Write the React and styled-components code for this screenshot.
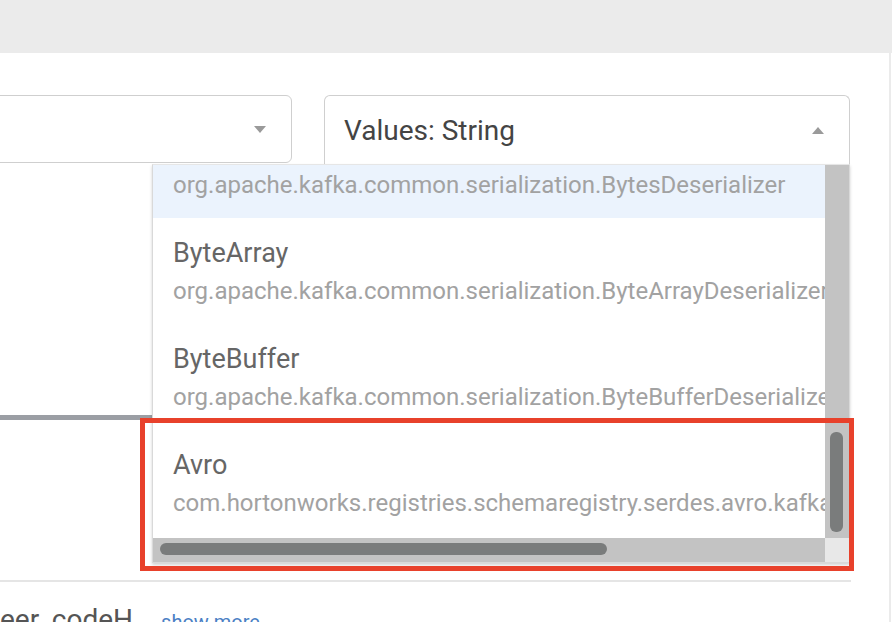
import React from 'react';
import styled, { createGlobalStyle } from 'styled-components';

const GlobalStyle = createGlobalStyle`
  * { box-sizing: border-box; }
  html, body {
    margin: 0;
    padding: 0;
    background: #fff;
    overflow: hidden;
    font-family: Roboto, "Liberation Sans", sans-serif;
  }
`;

const Page = styled.div`
  position: relative;
  width: 892px;
  height: 622px;
  display: flex;
  flex-direction: column;
`;

const TopBar = styled.div`
  height: 53px;
  background: #ebebeb;
  flex-shrink: 0;
`;

const Panel = styled.div`
  width: 891px;
  flex: 1;
  border-right: 2px solid #ebebeb;
  overflow: hidden;
`;

const FormArea = styled.div`
  width: 851px;
  height: 529px;
  padding-top: 42px;
  border-bottom: 2px solid #e5e5e5;
`;

const SelectRow = styled.div`
  display: grid;
  grid-template-columns: 340px 526px;
  column-gap: 32px;
  margin-left: -48px;
  align-items: start;
`;

const Column = styled.div`
  position: relative;
  display: flex;
  flex-direction: column;
`;

const Select = styled.div`
  display: flex;
  align-items: center;
  justify-content: space-between;
  height: ${(p) => (p.$open ? '69px' : '68px')};
  padding: 0 25px 0 19px;
  border: 1px solid #cfcfcf;
  border-bottom: ${(p) => (p.$open ? 'none' : '1px solid #cfcfcf')};
  border-radius: ${(p) => (p.$open ? '6px 6px 0 0' : '6px')};
  background: #fff;
  font-size: 28px;
  color: #444;
`;

const Caret = styled.span`
  width: 0;
  height: 0;
  border-left: 6px solid transparent;
  border-right: 6px solid transparent;
  ${(p) => (p.$up ? 'border-bottom: 7px solid #9a9a9a;' : 'border-top: 7px solid #9a9a9a;')}
`;

const LeftBox = styled.div`
  height: 257px;
  background: #fff;
  border-bottom: 5px solid #9b9ea4;
`;

const Dropdown = styled.div`
  position: absolute;
  top: 69px;
  right: 0;
  width: 698px;
  height: 399px;
  display: grid;
  grid-template-columns: 672px 24px;
  grid-template-rows: 373px 24px;
  background: #fff;
  border: 1px solid #d9d9d9;
  border-top-color: #e6e6e6;
  box-shadow: 0 2px 3px rgba(0, 0, 0, 0.18);
  z-index: 2;
`;

const List = styled.div`
  overflow: hidden;
`;

const ListInner = styled.div`
  margin-top: -53px;
`;

const Option = styled.div`
  padding: 18px 20px;
  background: ${(p) => (p.$active ? '#ebf3fd' : '#fff')};
  white-space: nowrap;
  display: flex;
  flex-direction: column;
  gap: 6px;
`;

const OptionTitle = styled.div`
  font-size: 27px;
  line-height: 34px;
  color: #666;
`;

const OptionClass = styled.div`
  font-size: 24px;
  line-height: 30px;
  color: #a2a2a2;
`;

const VTrack = styled.div`
  background: #c3c3c3;
  padding: 0 6px 0 5px;
`;

const VThumb = styled.div`
  margin-top: ${(p) => p.$offset}px;
  height: ${(p) => p.$size}px;
  border-radius: 6px;
  background: #7a7c7c;
`;

const HTrack = styled.div`
  background: #c3c3c3;
  padding: 5px 0 0 7px;
`;

const HThumb = styled.div`
  width: ${(p) => p.$size}px;
  height: 12px;
  border-radius: 6px;
  background: #7a7c7c;
`;

const Corner = styled.div`
  background: #e8e8e8;
`;

const Footer = styled.div`
  display: flex;
  align-items: baseline;
  gap: 28px;
  padding-top: 21px;
`;

const Code = styled.span`
  font-size: 28px;
  line-height: 34px;
  color: #555;
`;

const ShowMore = styled.a`
  font-size: 20px;
  color: #4a80c4;
  text-decoration: none;
`;

const Highlight = styled.div`
  position: absolute;
  left: 140px;
  top: 418px;
  width: 714px;
  height: 153px;
  border: 5px solid #e8412b;
  pointer-events: none;
  z-index: 3;
`;

const options = [
  { name: 'Bytes', cls: 'org.apache.kafka.common.serialization.BytesDeserializer', active: true },
  { name: 'ByteArray', cls: 'org.apache.kafka.common.serialization.ByteArrayDeserializer' },
  { name: 'ByteBuffer', cls: 'org.apache.kafka.common.serialization.ByteBufferDeserializer' },
  { name: 'Avro', cls: 'com.hortonworks.registries.schemaregistry.serdes.avro.kafka.KafkaAvroDeserializer' },
];

export default function App() {
  return (
    <>
      <GlobalStyle />
      <Page>
        <TopBar />
        <Panel>
          <FormArea>
            <SelectRow>
              <Column>
                <Select>
                  <span />
                  <Caret />
                </Select>
                <LeftBox />
              </Column>
              <Column>
                <Select $open>
                  <span>Values: String</span>
                  <Caret $up />
                </Select>
                <Dropdown>
                  <List>
                    <ListInner>
                      {options.map((o) => (
                        <Option key={o.name} $active={o.active}>
                          <OptionTitle>{o.name}</OptionTitle>
                          <OptionClass>{o.cls}</OptionClass>
                        </Option>
                      ))}
                    </ListInner>
                  </List>
                  <VTrack>
                    <VThumb $offset={267} $size={100} />
                  </VTrack>
                  <HTrack>
                    <HThumb $size={447} />
                  </HTrack>
                  <Corner />
                </Dropdown>
              </Column>
            </SelectRow>
          </FormArea>
          <Footer>
            <Code>eer_codeH</Code>
            <ShowMore href="#">show more</ShowMore>
          </Footer>
        </Panel>
        <Highlight />
      </Page>
    </>
  );
}
